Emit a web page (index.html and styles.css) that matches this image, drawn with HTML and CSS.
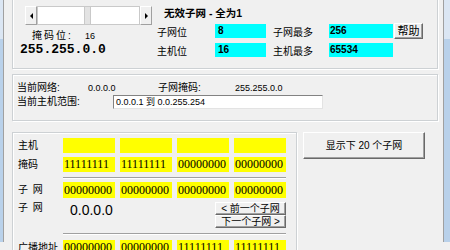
FILE: index.html
```html
<!DOCTYPE html>
<html lang="zh-CN">

<head>
  <meta charset="UTF-8">
  <meta name="viewport" content="width=device-width, initial-scale=1.0">
  <title>子网计算</title>
  <link rel="stylesheet" href="styles.css">
</head>

<body>
  <div class="window">
    <div class="client">
      <section class="group top">
        <div class="scale">
          <div class="scroll">
            <span class="arrow left"></span>
            <span class="track t1"></span>
            <span class="thumb"></span>
            <span class="track t2"></span>
            <span class="arrow right"></span>
          </div>
          <div class="bits">
            <span class="bits-label">掩码位:</span>
            <span class="num">16</span>
          </div>
          <div class="mask">255.255.0.0</div>
        </div>
        <div class="info">
          <div class="title">无效子网 - 全为1</div>
          <div class="row">
            <span class="lbl">子网位</span>
            <span class="field f1">8</span>
            <span class="lbl l2">子网最多</span>
            <span class="field f2">256</span>
            <button class="btn help">帮助</button>
          </div>
          <div class="row">
            <span class="lbl">主机位</span>
            <span class="field f1">16</span>
            <span class="lbl l2">主机最多</span>
            <span class="field f2">65534</span>
          </div>
        </div>
      </section>

      <section class="group net">
        <div class="net-row">
          <span>当前网络:</span>
          <span class="num">0.0.0.0</span>
          <span>子网掩码:</span>
          <span class="num">255.255.0.0</span>
        </div>
        <div class="range-row">
          <span class="range-label">当前主机范围:</span>
          <div class="input">0.0.0.1 到 0.0.255.254</div>
        </div>
      </section>

      <div class="lower">
        <section class="group bitsbox">
          <div class="brow">
            <span class="blbl">主机</span>
            <span class="cell"></span>
            <span class="cell"></span>
            <span class="cell"></span>
            <span class="cell"></span>
          </div>
          <div class="brow gap4">
            <span class="blbl">掩码</span>
            <span class="cell">11111111</span>
            <span class="cell">11111111</span>
            <span class="cell">00000000</span>
            <span class="cell">00000000</span>
          </div>
          <hr class="sep">
          <div class="brow tall">
            <span class="blbl sp">子 网</span>
            <span class="cell">00000000</span>
            <span class="cell">00000000</span>
            <span class="cell">00000000</span>
            <span class="cell">00000000</span>
          </div>
          <div class="nav-row">
            <span class="blbl sp">子 网</span>
            <span class="ip">0.0.0.0</span>
            <div class="navs">
              <button class="btn nav">&lt; 前一个子网</button>
              <button class="btn nav">下一个子网 &gt;</button>
            </div>
          </div>
          <hr class="sep">
          <div class="brow gap5">
            <span class="blbl">广播地址</span>
            <span class="cell">00000000</span>
            <span class="cell">00000000</span>
            <span class="cell">11111111</span>
            <span class="cell">11111111</span>
          </div>
        </section>
        <button class="btn show">显示下 20 个子网</button>
      </div>
    </div>
  </div>
</body>

</html>
```

FILE: styles.css
```css
* {
  margin: 0;
  padding: 0;
  box-sizing: border-box;
}

html,
body {
  width: 450px;
  height: 250px;
  overflow: hidden;
}

body {
  font-family: "Liberation Sans", "Noto Sans CJK SC", sans-serif;
  font-size: 10px;
  color: #000;
  background: #f0f0f0;
}

.window {
  height: 250px;
  padding: 0 6px 0 3px;
  background: linear-gradient(#dbe6f3 0, #dbe6f3 47px, #b9d1ea 47px);
}

.client {
  height: 100%;
  border-left: 1px solid #a0a0a0;
  border-right: 1px solid #a0a0a0;
  background: #f0f0f0;
  padding: 0 5px 0 8px;
}

.group {
  border: 1px solid #cdd1d4;
  box-shadow: inset 1px 1px #fff, 1px 1px #fff;
}

/* top box */
.top {
  height: 77px;
  margin-top: -8px;
  display: flex;
  align-items: flex-start;
}

.scale {
  width: 139px;
  padding-top: 13px;
}

.scroll {
  display: flex;
  width: 127px;
  height: 19px;
  margin-left: 12px;
}

.arrow {
  width: 12px;
  background: #f0f0f0;
  border: 1px solid;
  border-color: #fff #a0a0a0 #a0a0a0 #fff;
  display: flex;
  align-items: center;
  justify-content: center;
}

.arrow::before {
  content: "";
  border: 3px solid transparent;
}

.arrow.left::before {
  border-left-width: 0;
  border-right-color: #000;
}

.arrow.right::before {
  border-right-width: 0;
  border-left-color: #000;
}

.track {
  background: #fff;
  border: 1px solid #c9c9c9;
}

.t1 {
  width: 48px;
}

.t2 {
  width: 50px;
}

.thumb {
  width: 5px;
  background: #e3e3e3;
  border-top: 1px solid #c9c9c9;
  border-bottom: 1px solid #c9c9c9;
}

.bits {
  display: flex;
  margin: 5px 0 0 19px;
  line-height: 12px;
}

.bits-label {
  width: 53px;
  letter-spacing: 2px;
}

.num {
  font-size: 9px;
}

.mask {
  margin: 1px 0 0 7px;
  font: bold 13px/14px "Liberation Mono", monospace;
}

.info {
  margin-left: 5px;
  padding-top: 13px;
}

.title {
  font-weight: bold;
  font-size: 10.5px;
  line-height: 14px;
  padding-left: 7px;
}

.row {
  display: flex;
  align-items: center;
  height: 16px;
  margin-top: 3px;
}

.lbl {
  width: 58px;
}

.lbl.l2 {
  width: 56px;
  margin-left: 7px;
}

.field {
  height: 14px;
  background: #00ffff;
  font-weight: bold;
  line-height: 14px;
  padding-left: 3px;
}

.f1 {
  width: 51px;
}

.f2 {
  width: 64px;
  padding-left: 1px;
}

.btn {
  font: 10px/11px "Liberation Sans", "Noto Sans CJK SC", sans-serif;
  color: #000;
  background: #f0f0f0;
  border: 1px solid;
  border-color: #fff #696969 #696969 #fff;
  box-shadow: inset -1px -1px #a0a0a0;
}

.help {
  margin-left: 1px;
  width: 29px;
  height: 16px;
  font-size: 11px;
}

/* current network */
.net {
  margin-top: 5px;
  height: 47px;
  padding: 7px 0 0 4px;
}

.net-row {
  display: grid;
  grid-template-columns: 71px 70px 77px auto;
  height: 12px;
  line-height: 12px;
}

.range-row {
  display: flex;
  align-items: center;
  height: 14px;
  margin-top: 1px;
  line-height: 12px;
}

.range-label {
  width: 96px;
}

.input {
  width: 210px;
  height: 14px;
  background: #fff;
  border: 1px solid;
  border-color: #828282 #e3e3e3 #e3e3e3 #828282;
  padding-left: 2px;
  font-size: 9px;
  line-height: 12px;
}

/* bit rows */
.lower {
  display: flex;
  align-items: flex-start;
  margin-top: 11px;
}

.bitsbox {
  width: 285px;
  height: 130px;
  padding: 5px 10px 0 5px;
}

.brow {
  display: grid;
  grid-template-columns: 40px repeat(4, 52px);
  column-gap: 5px;
  align-items: center;
  height: 15px;
}

.brow.gap4 {
  margin-top: 4px;
}

.brow.tall {
  height: 16px;
  margin-top: 3px;
}

.brow.gap5 {
  margin-top: 5px;
}

.blbl {
  line-height: 12px;
  white-space: nowrap;
}

.blbl.sp {
  word-spacing: 2px;
}

.cell {
  height: 100%;
  background: #ffff00;
  font: 12px/15px "Liberation Serif", serif;
  padding-left: 1px;
}

.tall .cell {
  line-height: 16px;
}

.sep {
  border: 0;
  border-top: 1px solid #a0a0a0;
  border-bottom: 1px solid #fff;
  margin: 5px 0 0 45px;
  width: 223px;
}

.nav-row {
  display: flex;
  align-items: flex-start;
  height: 26px;
  margin-top: 4px;
}

.nav-row .blbl {
  width: 52px;
}

.ip {
  font-size: 14px;
  line-height: 16px;
}

.navs {
  margin-left: auto;
  display: flex;
  flex-direction: column;
  width: 71px;
}

.nav {
  height: 13px;
  line-height: 10px;
}

.show {
  margin-left: 6px;
  width: 122px;
  height: 27px;
}
```
